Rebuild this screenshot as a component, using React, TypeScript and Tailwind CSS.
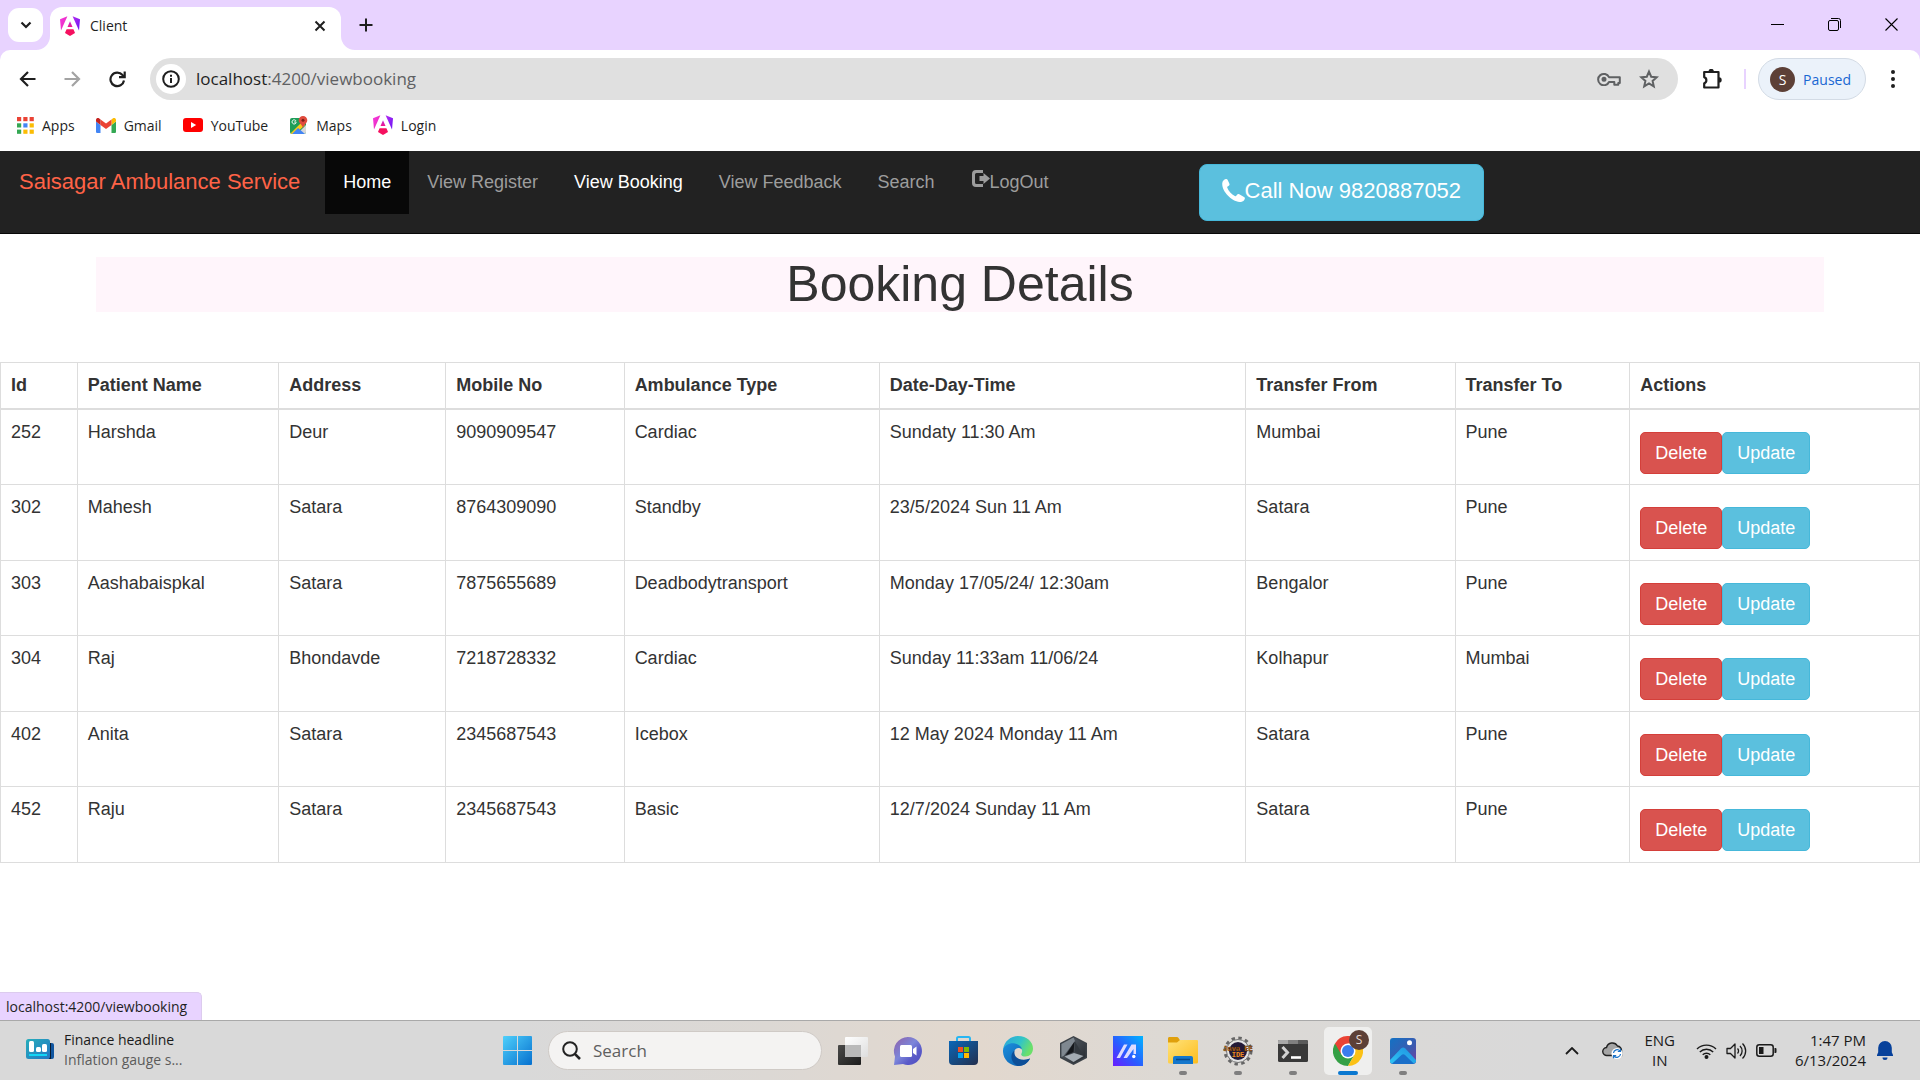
import { ReactNode } from 'react';

const uiFont = "font-['Open_Sans','Noto_Sans',sans-serif]";
const pageFont = "font-['Liberation_Sans',Arial,sans-serif]";

const bookings = [
  ['252', 'Harshda', 'Deur', '9090909547', 'Cardiac', 'Sundaty 11:30 Am', 'Mumbai', 'Pune'],
  ['302', 'Mahesh', 'Satara', '8764309090', 'Standby', '23/5/2024 Sun 11 Am', 'Satara', 'Pune'],
  ['303', 'Aashabaispkal', 'Satara', '7875655689', 'Deadbodytransport', 'Monday 17/05/24/ 12:30am', 'Bengalor', 'Pune'],
  ['304', 'Raj', 'Bhondavde', '7218728332', 'Cardiac', 'Sunday 11:33am 11/06/24', 'Kolhapur', 'Mumbai'],
  ['402', 'Anita', 'Satara', '2345687543', 'Icebox', '12 May 2024 Monday 11 Am', 'Satara', 'Pune'],
  ['452', 'Raju', 'Satara', '2345687543', 'Basic', '12/7/2024 Sunday 11 Am', 'Satara', 'Pune'],
];

const columns = [
  { label: 'Id', width: 'w-[4%]' },
  { label: 'Patient Name', width: 'w-[10.5%]' },
  { label: 'Address', width: 'w-[8.7%]' },
  { label: 'Mobile No', width: 'w-[9.3%]' },
  { label: 'Ambulance Type', width: 'w-[13.3%]' },
  { label: 'Date-Day-Time', width: 'w-[19.1%]' },
  { label: 'Transfer From', width: 'w-[10.9%]' },
  { label: 'Transfer To', width: 'w-[9.1%]' },
  { label: 'Actions', width: '' },
];

function AngularLogo() {
  return (
    <svg viewBox="0 0 20 20" className="size-5" aria-hidden="true">
      <defs>
        <linearGradient id="ngLeft" x1="0" y1="0" x2="1" y2="1">
          <stop offset="0" stopColor="#f637e3" />
          <stop offset="1" stopColor="#e52bb0" />
        </linearGradient>
        <linearGradient id="ngRight" x1="0" y1="0" x2="1" y2="1">
          <stop offset="0" stopColor="#b62cf0" />
          <stop offset="1" stopColor="#6a14f5" />
        </linearGradient>
        <linearGradient id="ngMid" x1="0" y1="0" x2="0" y2="1">
          <stop offset="0" stopColor="#c02ad8" />
          <stop offset="1" stopColor="#f0148a" />
        </linearGradient>
      </defs>
      <path d="M0 3.3 7.4.2 1 14.4z" fill="url(#ngLeft)" />
      <path d="M20 3.3 12.6.2 19 14.4z" fill="url(#ngRight)" />
      <path d="M10 5.3 12.5 11H7.5z" fill="url(#ngMid)" />
      <path d="M5.8 15 6.6 13.2h6.8l.8 1.8.8 2.1L10 20l-5-2.9z" fill="#f5105f" />
    </svg>
  );
}

function AppsIcon() {
  const colors = ['#ea4335', '#ea4335', '#ea4335', '#34a853', '#4285f4', '#fbbc04', '#34a853', '#fbbc04', '#fbbc04'];
  return (
    <svg viewBox="0 0 17 17" className="size-[17px]" aria-hidden="true">
      {colors.map((c, i) => (
        <rect key={i} x={(i % 3) * 6.3} y={Math.floor(i / 3) * 6.3} width="4.2" height="4.2" fill={c} />
      ))}
    </svg>
  );
}

function GmailIcon() {
  return (
    <svg viewBox="0 0 20 15" className="h-[15px] w-5" aria-hidden="true">
      <path d="M1.3 15h3.2V7L0 3.6v10.1C0 14.4.6 15 1.3 15z" fill="#4285f4" />
      <path d="M15.5 15h3.2c.7 0 1.3-.6 1.3-1.3V3.6L15.5 7z" fill="#34a853" />
      <path d="M15.5 1.4V7L20 3.6V2c0-1.8-2-2.7-3.3-1.6z" fill="#fbbc04" />
      <path d="M4.5 7V1.4L10 5.5l5.5-4.1V7L10 11.1z" fill="#ea4335" />
      <path d="M0 2v1.6L4.5 7V1.4L3.3.4C2-.7 0 .2 0 2z" fill="#c5221f" />
    </svg>
  );
}

function YouTubeIcon() {
  return (
    <svg viewBox="0 0 20 14" className="h-[14px] w-5" aria-hidden="true">
      <rect width="20" height="14" rx="3" fill="#f00" />
      <path d="M8 4v6l5.2-3z" fill="#fff" />
    </svg>
  );
}

function MapsIcon() {
  return (
    <svg viewBox="0 0 19 19" className="size-[19px]" aria-hidden="true">
      <clipPath id="mapClip"><rect x="1" y="2" width="16" height="16" rx="2" /></clipPath>
      <g clipPath="url(#mapClip)">
        <rect x="1" y="2" width="16" height="16" fill="#1e9d58" />
        <path d="M17 9v9H8z" fill="#d8d8d8" />
        <path d="M0 19 13 6l3 3L4 20z" fill="#fbc918" />
        <path d="M3 18l6-6 7 6z" fill="#4285f4" />
      </g>
      <path d="M7.2 6H5.2M7 4.9A2.1 2.1 0 1 0 7.2 6.4" fill="none" stroke="#fff" strokeWidth="1" />
      <path d="M14 0a4.3 4.3 0 0 0-4.3 4.3c0 3 3.5 4 4.3 8 .8-4 4.3-5 4.3-8A4.3 4.3 0 0 0 14 0z" fill="#e04b3d" />
      <circle cx="14" cy="4.3" r="1.5" fill="#7d2019" />
    </svg>
  );
}

function TabStrip() {
  return (
    <header className="flex h-[50px] items-start bg-[#e8d3ff] pl-2">
      <button aria-label="Search tabs" className="mt-2 flex h-[34px] w-[35px] items-center justify-center rounded-[11px] bg-white">
        <svg viewBox="0 0 12 8" className="h-2 w-3" fill="none" stroke="#1f1f1f" strokeWidth="2.2"><path d="m1.5 1.5 4.5 4.5 4.5-4.5" /></svg>
      </button>
      <div className="relative ml-[7px] mt-[7px] flex h-[43px] w-[291px] items-center rounded-t-xl bg-white pb-4 pl-[10px] pr-[15px] pt-[10px]">
        <svg viewBox="0 0 14 14" className="absolute -left-[14px] bottom-0 size-[14px]" fill="#fff" aria-hidden="true"><path d="M14 0v14H0A14 14 0 0 0 14 0z" /></svg>
        <svg viewBox="0 0 14 14" className="absolute -right-[14px] bottom-0 size-[14px]" fill="#fff" aria-hidden="true"><path d="M0 0v14h14A14 14 0 0 1 0 0z" /></svg>
        <AngularLogo />
        <span className="ml-[10px] flex-1 text-[14px] leading-5 text-[#1f1f1f]">Client</span>
        <button aria-label="Close tab">
          <svg viewBox="0 0 12 12" className="size-3" stroke="#1f1f1f" strokeWidth="2"><path d="m1.5 1.5 9 9m0-9-9 9" /></svg>
        </button>
      </div>
      <button aria-label="New tab" className="ml-[18px] mt-[18px]">
        <svg viewBox="0 0 14 14" className="size-[14px]" stroke="#1f1f1f" strokeWidth="2"><path d="M7 .5v13M.5 7h13" /></svg>
      </button>
      <div className="ml-auto flex">
        <button aria-label="Minimize" className="flex h-[49px] w-[57px] items-center justify-center">
          <svg viewBox="0 0 13 13" className="size-[13px]" stroke="#000"><path d="M0 6.5h13" /></svg>
        </button>
        <button aria-label="Restore" className="flex h-[49px] w-[57px] items-center justify-center">
          <svg viewBox="0 0 13 13" className="size-[13px]" fill="none" stroke="#000"><rect x=".5" y="2.5" width="10" height="10" rx="1.5" /><path d="M3 .5h7.500a2 2 0 0 1 2 2V10" /></svg>
        </button>
        <button aria-label="Close" className="flex h-[49px] w-[57px] items-center justify-center">
          <svg viewBox="0 0 13 13" className="size-[13px]" stroke="#000" strokeWidth="1.1"><path d="m.5.5 12 12m0-12-12 12" /></svg>
        </button>
      </div>
    </header>
  );
}

function Toolbar() {
  return (
    <div className="bg-[#e8d3ff]">
      <div className="flex h-[58px] items-center rounded-t-[10px] bg-white pl-[19px] pr-[25px]">
        <button aria-label="Back">
          <svg viewBox="0 0 17 16" className="h-4 w-[17px]" fill="none" stroke="#1f1f1f" strokeWidth="2.2"><path d="M16.5 8H2.5M9 1 2 8l7 7" /></svg>
        </button>
        <button aria-label="Forward" className="ml-7">
          <svg viewBox="0 0 17 16" className="h-4 w-[17px]" fill="none" stroke="#a3a3a3" strokeWidth="2.2"><path d="M.5 8h14M8 1l7 7-7 7" /></svg>
        </button>
        <button aria-label="Reload" className="ml-7">
          <svg viewBox="0 0 17 17" className="size-[17px]" fill="none" stroke="#1f1f1f" strokeWidth="2.2"><path d="M15 9.500A6.800 6.800 0 1 1 13.500 4L15 5.500" /><path d="M15.700.5v5.700H10" /></svg>
        </button>
        <div className="ml-6 flex h-[42px] flex-1 items-center rounded-full bg-[#e0e0e0] pl-[6px] pr-[19px]">
          <button aria-label="View site information" className="flex size-[30px] items-center justify-center rounded-full bg-white">
            <svg viewBox="0 0 18 18" className="size-[18px]" fill="none" stroke="#1f1f1f" strokeWidth="2"><circle cx="9" cy="9" r="7.8" /><path d="M9 8v5M9 4.800v2" /></svg>
          </button>
          <div className="relative ml-[10px] flex-1">
            <input aria-label="Address" defaultValue="localhost:4200/viewbooking" className="w-full bg-transparent text-[17px] leading-6 text-transparent caret-black outline-none" />
            <span aria-hidden="true" className="pointer-events-none absolute inset-0 text-[17px] leading-6 text-[#5f6163]"><span className="text-[#1f1f1f]">localhost</span>:4200/viewbooking</span>
          </div>
          <button aria-label="Passwords">
            <svg viewBox="0 0 24 14" className="h-[14px] w-6" fill="none" stroke="#5f6163" strokeWidth="2"><path d="M12 5.200h10.800V11h-1.500v1.800h-4V10H12A5.700 5.700 0 1 1 12 5.200z" strokeLinejoin="round" /><circle cx="7" cy="7.3" r="1.5" fill="#5f6163" /></svg>
          </button>
          <button aria-label="Bookmark this tab" className="ml-[18px]">
            <svg viewBox="0 0 20 20" className="size-5" fill="none" stroke="#5f6163" strokeWidth="2"><path d="m10 2.600 2.200 5.100 5.600.5-4.200 3.700 1.200 5.500-4.800-2.900-4.800 2.900 1.200-5.500L2.200 8.200l5.600-.5z" /></svg>
          </button>
        </div>
        <button aria-label="Extensions" className="ml-6">
          <svg viewBox="0 0 21 20" className="h-5 w-[21px]" aria-hidden="true"><path d="M3 3h13.500v15.500H2.200v-4.200a3.300 3.300 0 0 0 0-6.200V3z" fill="none" stroke="#1f1f1f" strokeWidth="2.2" strokeLinejoin="round" /><path d="M6.500 2.500a2.700 2.700 0 0 1 5.400 0zM17 8.200a2.700 2.700 0 0 1 0 5.400z" fill="#1f1f1f" /></svg>
        </button>
        <span className="ml-[21px] h-5 w-[2px] bg-[#e8d3ff]" />
        <button className="ml-3 flex h-[42px] items-center rounded-full border border-[#d3dbe5] bg-[#ebf2fa] pl-[11px] pr-[14px]">
          <span className="flex size-[25px] items-center justify-center rounded-full bg-[#5d4037] text-[14px] text-white">S</span>
          <span className="ml-2 text-[14px] text-[#1967d2]">Paused</span>
        </button>
        <button aria-label="Menu" className="ml-[25px]">
          <svg viewBox="0 0 4 18" className="h-[18px] w-1" fill="#1f1f1f"><circle cx="2" cy="2" r="2" /><circle cx="2" cy="9" r="2" /><circle cx="2" cy="16" r="2" /></svg>
        </button>
      </div>
    </div>
  );
}

function Bookmark({ icon, label }: { icon: ReactNode; label: string }) {
  return (
    <a href="#" className="flex items-center gap-2">
      {icon}
      <span>{label}</span>
    </a>
  );
}

function BookmarksBar() {
  return (
    <nav aria-label="Bookmarks" className="flex h-[43px] items-center gap-[21px] bg-white pb-[9px] pl-[17px] text-[14px] text-[#1f1f1f]">
      <Bookmark icon={<AppsIcon />} label="Apps" />
      <Bookmark icon={<GmailIcon />} label="Gmail" />
      <Bookmark icon={<YouTubeIcon />} label="YouTube" />
      <Bookmark icon={<MapsIcon />} label="Maps" />
      <Bookmark icon={<AngularLogo />} label="Login" />
    </nav>
  );
}

function NavBar() {
  const link = 'px-[18px] py-[19px] text-[#9d9d9d]';
  return (
    <nav aria-label="Site" className="flex h-[83px] items-start border-b border-[#080808] bg-[#222] text-lg leading-[25px]">
      <a href="#" className="py-[18px] pl-[19px] pr-[25px] text-[22px] text-[#ff6347]">Saisagar Ambulance Service</a>
      <a href="#" className="bg-[#080808] px-[18px] py-[19px] text-white">Home</a>
      <a href="#" className={link}>View Register</a>
      <a href="#" className="px-[18px] py-[19px] text-white">View Booking</a>
      <a href="#" className={link}>View Feedback</a>
      <a href="#" className={link}>Search</a>
      <a href="#" className="flex px-[18px] py-[19px] text-[#9d9d9d]">
        <svg viewBox="0 0 19 18" className="h-[18px] w-[19px]" fill="#9d9d9d" aria-hidden="true"><path d="M12 0H5a4 4 0 0 0-4 4v9a4 4 0 0 0 4 4h7v-3H5.500A1.500 1.500 0 0 1 4 12.500v-8A1.500 1.500 0 0 1 5.500 3H12z" /><path d="m12.500 3 6.500 5.500-6.500 5.500V11H8.500V6h4z" /></svg>
        LogOut
      </a>
      <button className="ml-[132px] mt-[13px] flex h-[57px] items-center rounded-lg border border-[#46b8da] bg-[#5bc0de] px-[22px] pb-1 text-[22px] text-white">
        <svg viewBox="0 0 23 23" className="size-[23px]" fill="#fff" aria-hidden="true"><path d="M.3 4C.5 2.200 2 .7 3.800.1c.8-.3 1.500.2 1.900 1l1.700 3.700c.4.9 0 1.700-.9 2.200l-.9.5c-.4.3-.5.7-.3 1.200 1.200 3.200 4.300 6.600 7.500 8.300.6.300 1.100.3 1.500-.2l.9-1.200c.6-.7 1.300-.8 2.100-.4l4.700 2.700c.8.5 1.100 1.100.8 1.900-.5 1.600-1.900 3-3.800 3.200C10 23.600-.7 12 .3 4z" /></svg>
        Call Now 9820887052
      </button>
    </nav>
  );
}

function BookingTable() {
  return (
    <table className="mt-[50px] h-[501px] w-full table-fixed border-collapse border border-[#ddd] text-lg leading-6">
      <thead>
        <tr>
          {columns.map((c) => (
            <th key={c.label} scope="col" className={`${c.width} h-[46px] border border-b-2 border-[#ddd] p-[10px] text-left align-top font-bold`}>{c.label}</th>
          ))}
        </tr>
      </thead>
      <tbody>
        {bookings.map((row) => (
          <tr key={row[0]}>
            {row.map((cell, i) => (
              <td key={i} className="border border-[#ddd] p-[10px] align-top">{cell}</td>
            ))}
            <td className="border border-[#ddd] p-[10px] align-top">
              <div className="mt-3 flex">
                <button className="h-[42px] rounded-[5px] border border-[#d43f3a] bg-[#d9534f] px-[14px] text-white">Delete</button>
                <button className="h-[42px] rounded-[5px] border border-[#46b8da] bg-[#5bc0de] px-[14px] text-white">Update</button>
              </div>
            </td>
          </tr>
        ))}
      </tbody>
    </table>
  );
}

function TaskButton({ label, children, running }: { label: string; children: ReactNode; running?: boolean }) {
  return (
    <button aria-label={label} className="relative flex size-12 items-center justify-center">
      {children}
      {running && <span className="absolute bottom-0 h-1 w-2 rounded-full bg-[#7f7f7f]" />}
    </button>
  );
}

function TaskApps() {
  return (
    <>
      <TaskButton label="Task view">
        <svg viewBox="0 0 30 28" className="h-7 w-[30px]">
          <defs>
            <linearGradient id="tvA" x1="0" y1="0" x2="1" y2="1"><stop stopColor="#4a4a48" /><stop offset="1" stopColor="#1c1c1c" /></linearGradient>
            <linearGradient id="tvB" x1="0" y1="0" x2="1" y2="1"><stop stopColor="#ffffff" /><stop offset="1" stopColor="#dedede" /></linearGradient>
          </defs>
          <rect y="8" width="23" height="20" rx="1" fill="url(#tvA)" />
          <rect x="7" width="23" height="20" rx="1" fill="url(#tvB)" />
          <path d="M7 8h16v12H8a1 1 0 0 1-1-1z" fill="#b9b9b9" />
        </svg>
      </TaskButton>
      <TaskButton label="Chat">
        <svg viewBox="0 0 30 28" className="h-7 w-[30px]">
          <defs><linearGradient id="chat" x1="0" y1="0" x2="1" y2="1"><stop stopColor="#8f5fa8" /><stop offset=".45" stopColor="#7c86da" /><stop offset=".7" stopColor="#5a5ac8" /><stop offset="1" stopColor="#4f4fc2" /></linearGradient></defs>
          <path d="M15 0a14 14 0 1 1-5 27.100L1 28l1-8.500A14 14 0 0 1 15 0z" fill="url(#chat)" />
          <rect x="7" y="8" width="12" height="12" rx="1.5" fill="#fff" /><path d="m20 12 3.500-2.500v9L20 16z" fill="#fff" />
        </svg>
      </TaskButton>
      <TaskButton label="Microsoft Store">
        <svg viewBox="0 0 29 29" className="size-[29px]">
          <defs><linearGradient id="store" x1="0" y1="0" x2="1" y2="1"><stop stopColor="#0a67b8" /><stop offset="1" stopColor="#232f4e" /></linearGradient></defs>
          <path d="M8 6V2.500C8 1.500 8.500 1 9.500 1h10c1 0 1.500.5 1.500 1.500V6" fill="none" stroke="#29b6f2" strokeWidth="2" />
          <path d="M0 5h29v20a4 4 0 0 1-4 4H4a4 4 0 0 1-4-4z" fill="url(#store)" />
          <path d="M9 11h5v5H9z" fill="#f25022" /><path d="M15 11h5v5h-5z" fill="#7fba00" /><path d="M9 17h5v5H9z" fill="#00a4ef" /><path d="M15 17h5v5h-5z" fill="#ffb900" />
        </svg>
      </TaskButton>
      <TaskButton label="Microsoft Edge">
        <svg viewBox="0 0 30 30" className="size-[30px]">
          <defs>
            <linearGradient id="edTop" x1="0" y1="0" x2="1" y2=".4"><stop stopColor="#2aa3dd" /><stop offset=".6" stopColor="#31c4c8" /><stop offset="1" stopColor="#6be06a" /></linearGradient>
            <linearGradient id="edLow" x1="0" y1="0" x2="1" y2="1"><stop stopColor="#1b8fde" /><stop offset="1" stopColor="#0c5aa8" /></linearGradient>
          </defs>
          <path d="M0 14C1 5 8 0 15 0c9 0 15 6 15 12.500 0 5-3.500 8-7.500 8-3.500 0-5-1.500-4-3 2-4-1-7-5-7.500C8 9.500 2 11 0 14z" fill="url(#edTop)" />
          <path d="M0 14c1.500-5 7-7.500 12-6.500 4 .8 6.500 3 7 6-3-3-8-1.500-8 3.500 0 6 7 9.500 16 5.500C24.500 27.500 20 30 15 30 6.500 30-.5 23 0 14z" fill="url(#edLow)" />
          <path d="M11.500 14.500C7 17.500 7 26 14.500 30 21 30 25 27 27 22.500 18 26 10 22 11.500 14.500z" fill="#0d4f98" />
        </svg>
      </TaskButton>
      <TaskButton label="Armoury Crate">
        <svg viewBox="0 0 27 29" className="h-[29px] w-[27px]">
          <defs><linearGradient id="crate" x1="0" y1="0" x2="1" y2="1"><stop stopColor="#5d656d" /><stop offset="1" stopColor="#24282d" /></linearGradient></defs>
          <path d="M13.500 0 27 7v15l-13.500 7L0 22V7z" fill="#3c4248" />
          <path d="M13.500 1.500 25.500 8v13l-12 6.500L1.500 21V8z" fill="url(#crate)" />
          <path d="M13.500 1.500 15 5 4 19.500 1.500 21V8z" fill="#7f8890" />
          <path d="M14.500 5.500 5.500 19.500l8-3.500z" fill="#15181c" /><path d="m15 5.500 8 13.500-8-3z" fill="#33393f" /><path d="m4.500 20.500 9.500-3.500 9.500 3-10 6z" fill="#a4acb3" />
        </svg>
      </TaskButton>
      <TaskButton label="MyASUS">
        <svg viewBox="0 0 30 30" className="size-[30px]">
          <defs><linearGradient id="asus" x1="0" y1="1" x2="1" y2="0"><stop stopColor="#6a1cff" /><stop offset=".45" stopColor="#2a5cff" /><stop offset="1" stopColor="#00b4ff" /></linearGradient></defs>
          <rect width="30" height="30" fill="url(#asus)" />
          <path d="M3.500 22 11 8.500h3.500L7 22zM10.500 22 18.500 8.500H23V18h-2.500v-5L14 22z" fill="#dedcff" /><circle cx="20.800" cy="20.500" r="1.700" fill="#fff" />
        </svg>
      </TaskButton>
      <TaskButton label="File Explorer" running>
        <svg viewBox="0 0 30 27" className="h-[27px] w-[30px]">
          <defs><linearGradient id="fold" x1="0" y1="0" x2="1" y2="1"><stop stopColor="#ffe27a" /><stop offset="1" stopColor="#fdbd1c" /></linearGradient></defs>
          <path d="M0 1.500C0 .6.600 0 1.500 0h7c1 0 1.500.3 2 1L12.500 4H30v8H0z" fill="#e0a00c" />
          <path d="M0 5.500h9L12 3h17a1 1 0 0 1 1 1v21a1.500 1.500 0 0 1-1.500 1.500h-27A1.500 1.500 0 0 1 0 25z" fill="url(#fold)" />
          <path d="M5 27v-6a2 2 0 0 1 2-2h16a2 2 0 0 1 2 2v6z" fill="#1577cc" /><path d="M8 22.500h14" stroke="#0a4a8c" strokeWidth="1.5" />
        </svg>
      </TaskButton>
      <TaskButton label="Eclipse Java EE IDE" running>
        <svg viewBox="0 0 30 30" className="size-[30px]">
          <circle cx="15" cy="15" r="13" fill="none" stroke="#666" strokeWidth="3" strokeDasharray="3.4 3.4" />
          <circle cx="15" cy="15" r="11.5" fill="#e4e4e4" stroke="#777" />
          <circle cx="15" cy="15" r="9" fill="#231a38" />
          <text x="15" y="14.5" textAnchor="middle" fontSize="7" fontWeight="700" fill="#ef8a1d" stroke="#3b1d05" strokeWidth=".3" fontFamily="Liberation Mono, monospace">Java EE</text>
          <text x="15" y="20.5" textAnchor="middle" fontSize="7" fontWeight="700" fill="#ef8a1d" fontFamily="Liberation Mono, monospace">IDE</text>
        </svg>
      </TaskButton>
      <TaskButton label="Terminal" running>
        <svg viewBox="0 0 30 22" className="h-[22px] w-[30px]">
          <rect width="30" height="22" rx="1.5" fill="#393939" /><path d="M1.500 0H10v4H0V1.500A1.500 1.500 0 0 1 1.500 0z" fill="#a8a8a8" /><path d="M10 0h10v4H10z" fill="#7f7f7f" /><path d="M20 0h8.500A1.500 1.500 0 0 1 30 1.500V4H20z" fill="#5a5a5a" />
          <path d="m4.500 7 5 5.500-5 5.500" fill="none" stroke="#d2d2d2" strokeWidth="3" /><path d="M13 17.500h10" stroke="#fff" strokeWidth="2.6" />
        </svg>
      </TaskButton>
      <button aria-label="Google Chrome" className="relative flex size-12 items-center justify-center rounded-[5px] bg-[#efefee]">
        <svg viewBox="0 0 30 30" className="size-[30px]">
          <path d="M15 15 2 7.500A15 15 0 0 0 15 30l6.500-11.200z" fill="#34a045" />
          <path d="M15 7.500h13A15 15 0 0 1 15 30l6.500-11.200z" fill="#fbc116" />
          <path d="M15 7.500h13A15 15 0 0 0 2 7.500l6.500 11.300z" fill="#ea4335" />
          <circle cx="15" cy="15" r="7.5" fill="#fff" /><circle cx="15" cy="15" r="6" fill="#3b7ded" />
        </svg>
        <span className="absolute right-[3px] top-[3px] flex size-5 items-center justify-center rounded-full bg-[#5d4037] text-[12px] text-[#e6dcd8]">S</span>
        <span className="absolute bottom-0 h-1 w-5 rounded-full bg-[#0a78d0]" />
      </button>
      <TaskButton label="Photos" running>
        <svg viewBox="0 0 26 26" className="size-[26px]">
          <defs>
            <linearGradient id="phBg" x1="0" y1="0" x2="1" y2="1"><stop stopColor="#1372c4" /><stop offset=".6" stopColor="#3c5bb0" /><stop offset="1" stopColor="#7a3fa0" /></linearGradient>
            <linearGradient id="phFg" x1="0" y1="1" x2="1" y2="0"><stop stopColor="#2fc6f4" /><stop offset="1" stopColor="#1e8fe0" /></linearGradient>
          </defs>
          <rect width="26" height="26" rx="3" fill="url(#phBg)" />
          <path d="M0 22 11 10.500a3 3 0 0 1 4.300 0L26 22a3.500 3.500 0 0 1-3 4H3a3.500 3.500 0 0 1-3-4z" fill="url(#phFg)" /><path d="M2 25.800 11.500 17a3 3 0 0 1 3.500 0l9 8.800a3 3 0 0 1-1 .2H3z" fill="#1a6fc9" />
          <circle cx="19.500" cy="4.800" r="2.500" fill="#fff" />
        </svg>
      </TaskButton>
    </>
  );
}

function Taskbar() {
  return (
    <footer className="grid h-[60px] grid-cols-[1fr_auto_1fr] items-center border-t border-[#a9a9a9] bg-[linear-gradient(90deg,#d9d9d9_0%,#d9d9d9_27%,#dcd8d4_40%,#e2d8ce_51%,#dcd9d5_62%,#d9d9d9_80%)]">
      <button className="flex items-center justify-self-start pb-[2px] pl-[26px] text-left">
        <svg viewBox="0 0 28 21" className="h-[21px] w-7" aria-hidden="true">
          <defs><linearGradient id="fin" x1="0" y1="0" x2="1" y2="1"><stop stopColor="#27aebb" /><stop offset="1" stopColor="#2275c4" /></linearGradient></defs>
          <rect x="14" y="4" width="14" height="16" rx="2" fill="#1156a0" /><rect x="23" y="4" width="2" height="16" fill="#0b1c30" />
          <rect width="24" height="20" rx="2.5" fill="url(#fin)" />
          <rect x="3" y="2" width="5" height="11" rx="1.5" fill="#fff" /><rect x="10" y="8" width="5" height="5" rx="1.5" fill="#fff" /><rect x="16" y="5" width="5" height="8" rx="1.5" fill="#fff" /><rect x="3" y="15" width="18" height="2" fill="#12d5f5" />
        </svg>
        <span className="ml-[10px] flex flex-col text-[14px] leading-5">
          <span className="text-[#1b1b1b]">Finance headline</span>
          <span className="text-[#5c5c5c]">Inflation gauge s...</span>
        </span>
      </button>
      <div className="flex items-center gap-[7px]">
        <TaskButton label="Start">
          <svg viewBox="0 0 29 29" className="size-[29px]">
            <defs><linearGradient id="win" gradientUnits="userSpaceOnUse" x1="0" y1="0" x2="29" y2="29"><stop stopColor="#4fd0fb" /><stop offset="1" stopColor="#0670cf" /></linearGradient></defs>
            <path d="M1 0h13v14H0V1a1 1 0 0 1 1-1zM15 0h13a1 1 0 0 1 1 1v13H15zM0 15h14v14H1a1 1 0 0 1-1-1zM15 15h14v13a1 1 0 0 1-1 1H15z" fill="url(#win)" />
          </svg>
        </TaskButton>
        <label className="flex h-[39px] w-[274px] items-center rounded-full border border-[#cfcac6] bg-[#f4f3f2] pl-[13px]">
          <svg viewBox="0 0 19 19" className="size-[19px]" fill="none" stroke="#222" strokeWidth="2" aria-hidden="true"><circle cx="8" cy="8" r="6.8" /><path d="m12.800 12.800 5.200 5.200" strokeWidth="2.6" /></svg>
          <input type="text" placeholder="Search" aria-label="Search" className="ml-3 w-[200px] bg-transparent text-[17px] outline-none placeholder:text-[#5f5f5f]" />
        </label>
        <TaskApps />
      </div>
      <div className="flex items-center justify-self-end pr-[27px] text-[15px] leading-5 text-[#1b1b1b]">
        <button aria-label="Show hidden icons">
          <svg viewBox="0 0 14 8" className="h-2 w-[14px]" fill="none" stroke="#1b1b1b" strokeWidth="1.8"><path d="m1 7 6-6 6 6" /></svg>
        </button>
        <svg viewBox="0 0 21 17" className="ml-[23px] h-[17px] w-[21px]" aria-hidden="true">
          <path d="M5 13.500a4 4 0 0 1-.5-8A6 6 0 0 1 15.500 4a4.500 4.500 0 0 1 4 5v4.500z" fill="#a5a5a5" stroke="#222" strokeWidth="1.4" />
          <circle cx="15" cy="11.5" r="5.5" fill="#fff" /><path d="M11.500 11a3.700 3.700 0 0 1 6.500-2M18.500 12a3.700 3.700 0 0 1-6.500 2M18.500 6.800v2.700h-2.700M11.500 16.200v-2.700h2.700" fill="none" stroke="#1a73c9" strokeWidth="1.2" />
        </svg>
        <span className="ml-[21px] pb-[2px] text-center">ENG<br />IN</span>
        <svg viewBox="0 0 21 16" className="ml-[21px] h-4 w-[21px]" fill="none" stroke="#1b1b1b" strokeWidth="1.4" aria-hidden="true"><path d="M1 6a13.500 13.500 0 0 1 19 0M3.800 9a9.500 9.500 0 0 1 13.400 0M6.700 11.800a5.400 5.400 0 0 1 7.600 0" /><circle cx="10.5" cy="14" r="1.3" fill="#1b1b1b" /></svg>
        <svg viewBox="0 0 21 18" className="ml-[9px] h-[18px] w-[21px]" fill="none" stroke="#1b1b1b" strokeWidth="1.3" aria-hidden="true"><path d="M1 6.500h3.500L9 2v14l-4.500-4.500H1z" strokeLinejoin="round" /><path d="M11.500 6.500a3.500 3.500 0 0 1 0 5M14 4a7 7 0 0 1 0 10M16.500 1.500a10.500 10.500 0 0 1 0 15" /></svg>
        <svg viewBox="0 0 21 13" className="ml-[9px] h-[13px] w-[21px]" aria-hidden="true"><rect x=".8" y=".8" width="16.4" height="11.4" rx="2.5" fill="none" stroke="#1b1b1b" strokeWidth="1.5" /><rect x="3" y="3" width="4.5" height="7" fill="#1b1b1b" /><path d="M18.500 4h1a1 1 0 0 1 1 1v3a1 1 0 0 1-1 1h-1z" fill="#1b1b1b" /></svg>
        <span className="ml-[18px] pb-[2px] text-right">1:47 PM<br />6/13/2024</span>
        <button aria-label="Notifications" className="ml-[11px]">
          <svg viewBox="0 0 16 19" className="h-[19px] w-4" fill="#07419b"><path d="M8 0a6.800 6.800 0 0 0-6.800 6.800v4.500L0 14v1h16v-1l-1.200-2.700V6.800A6.800 6.800 0 0 0 8 0zM5.500 16.500h5a2.500 2.500 0 0 1-5 0z" /></svg>
        </button>
      </div>
    </footer>
  );
}

export default function App() {
  return (
    <div className={`flex min-h-screen flex-col bg-white ${uiFont}`}>
      <TabStrip />
      <Toolbar />
      <BookmarksBar />
      <main className={`relative flex-1 text-[#333] ${pageFont}`}>
        <NavBar />
        <h1 className="mx-[5%] mt-[23px] bg-[#fff5fb] text-center text-[50px] leading-[55px]">Booking Details</h1>
        <BookingTable />
        <div className={`absolute bottom-0 left-0 rounded-tr-[5px] border-r border-t border-[#dccbee] bg-[#e8d3ff] pb-[3px] pl-[6px] pr-[14px] pt-1 text-[14px] leading-5 text-[#1f1f1f] ${uiFont}`}>
          localhost:4200/viewbooking
        </div>
      </main>
      <Taskbar />
    </div>
  );
}
